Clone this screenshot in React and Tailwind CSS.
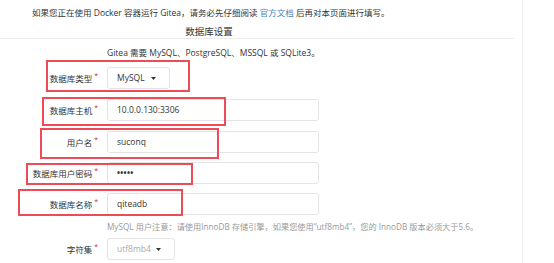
import React from 'react';

function Star() {
  return <span className="ml-[2px] align-super text-[7px] leading-none text-[#db2828]">*</span>;
}

function Caret() {
  return (
    <svg width="5" height="3" viewBox="0 0 5 3" className="shrink-0">
      <path d="M0 0h5L2.5 3z" fill="#333" />
    </svg>
  );
}

function Field({ label, children, className = '' }) {
  return (
    <div className={`flex items-center ${className}`}>
      <label className="w-[100px] pr-[2px] text-right text-[#333]">
        {label}
        <Star />
      </label>
      <div className="ml-[7px]">{children}</div>
    </div>
  );
}

function TextInput({ value }) {
  return (
    <div className="flex h-[22px] w-[212px] items-center rounded-[3px] border border-[#e4e4e4] bg-white pl-[9px] text-[#333]">
      {value}
    </div>
  );
}

function Select({ value, width, muted }) {
  return (
    <div
      className={`flex h-[22px] items-center justify-between rounded-[3px] border border-[#e4e4e4] bg-white pl-[9px] pr-[13px] ${width} ${
        muted ? 'text-[#aaa]' : 'text-[#333]'
      }`}
    >
      <span>{value}</span>
      <Caret />
    </div>
  );
}

export default function App() {
  // red annotation boxes drawn over the form
  const marks = [
    'left-[46px] top-[60px] w-[144px] h-[32px]',
    'left-[42px] top-[97px] w-[184px] h-[29px]',
    'left-[40px] top-[128px] w-[179px] h-[31px]',
    'left-[26px] top-[163px] w-[167px] h-[22px]',
    'left-[18px] top-[189px] w-[165px] h-[27px]',
  ];

  return (
    <div className="relative flex h-[263px] w-[554px] overflow-hidden bg-white font-['Open_Sans','Noto_Sans_CJK_SC',sans-serif] text-[8.5px] leading-[12px] text-[#333]">
      <div className="w-[523px] shrink-0 border-r border-[#eeeeee]">
        {/* notice */}
        <div className="h-[26px] pl-[32px] pt-[7px]">
          如果您正在使用 Docker 容器运行 Gitea，请务必先仔细阅读{' '}
          <span className="text-[#4183c4]">官方文档</span> 后再对本页面进行填写。
        </div>

        {/* section title */}
        <div className="h-[12px] w-[418px] text-center text-[9.5px]">数据库设置</div>
        <div className="h-px w-[514px] bg-[#ececec]" />

        <div className="mt-[8px] pl-[107px]">Gitea 需要 MySQL、PostgreSQL、MSSQL 或 SQLite3。</div>

        <Field label="数据库类型" className="mt-[8px]">
          <Select value="MySQL" width="w-[63px]" />
        </Field>
        <Field label="数据库主机" className="mt-[10px]">
          <TextInput value="10.0.0.130:3306" />
        </Field>
        <Field label="用户名" className="mt-[10px]">
          <TextInput value="suconq" />
        </Field>
        <Field label="数据库用户密码" className="mt-[9px]">
          <TextInput value={<span className="text-[8px] font-bold tracking-[0.3px]">•••••</span>} />
        </Field>
        <Field label="数据库名称" className="mt-[9px]">
          <TextInput value="qiteadb" />
        </Field>

        <div className="mt-[6px] pl-[107px] text-[8.2px] text-[#999]">
          MySQL 用户注意：请使用InnoDB 存储引擎，如果您使用“utf8mb4”，您的 InnoDB 版本必须大于5.6。
        </div>

        <Field label="字符集" className="mt-[5px]">
          <Select value="utf8mb4" width="w-[68px]" muted />
        </Field>
      </div>

      {marks.map((m) => (
        <div key={m} className={`pointer-events-none absolute border-2 border-[#ec4b57] ${m}`} />
      ))}
    </div>
  );
}
